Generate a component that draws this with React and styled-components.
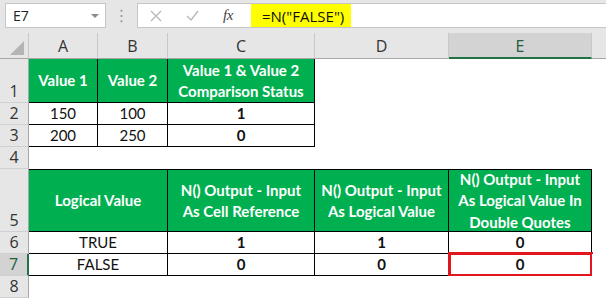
import React from "react";
import styled, { createGlobalStyle } from "styled-components";

const Global = createGlobalStyle`
  html, body { margin: 0; padding: 0; background: #fff; }
  body { width: 606px; height: 298px; overflow: hidden; }
`;

const Page = styled.div`
  width: 606px;
  height: 298px;
  display: flex;
  flex-direction: column;
  overflow: hidden;
  font-family: Lato, "Open Sans", sans-serif;
`;

const TopBar = styled.div`
  height: 33px;
  flex: none;
  background: #e6e6e6;
  display: flex;
  align-items: flex-start;
  padding: 3px 0 0 5px;
  box-sizing: border-box;
`;

const NameBox = styled.div`
  width: 101px;
  height: 25px;
  box-sizing: border-box;
  background: #fff;
  border: 1px solid #c6c6c6;
  display: flex;
  align-items: center;
  justify-content: space-between;
  padding: 0 6px 0 7px;
  font-family: "Open Sans", "Noto Sans", sans-serif;
  font-size: 14px;
  color: #222;
`;

const Caret = styled.span`
  width: 0;
  height: 0;
  border-left: 4px solid transparent;
  border-right: 4px solid transparent;
  border-top: 4px solid #8a8a8a;
`;

const Grip = styled.div`
  width: 31px;
  height: 25px;
  display: flex;
  align-items: center;
  justify-content: center;
  color: #9a9a9a;
  font-size: 16px;
  font-family: "DejaVu Sans", sans-serif;
`;

const FormulaBox = styled.div`
  flex: 1;
  height: 25px;
  box-sizing: border-box;
  background: #fff;
  border: 1px solid #c6c6c6;
  border-right: none;
  display: flex;
  align-items: center;
  padding-left: 12px;
`;

const IconSlot = styled.span`
  width: ${(p) => p.$w}px;
  display: flex;
  align-items: center;
  justify-content: flex-start;
  color: ${(p) => p.$c};
`;

const Fx = styled.span`
  font-family: "Liberation Serif", serif;
  font-style: italic;
  font-size: 15px;
  color: #444;
  letter-spacing: -0.5px;
`;

const Formula = styled.div`
  height: 23px;
  background: #ffff00;
  display: flex;
  align-items: center;
  padding: 0 7px 0 11px;
  font-family: "Open Sans", "Noto Sans", sans-serif;
  font-size: 15px;
  color: #111;
`;

const Sheet = styled.div`
  display: grid;
  grid-template-columns: 29px 69px 70px 147px 134px 143px 1fr;
  grid-template-rows: 26px 44px 22px 22px 22px 63px 22px 22px 22px;
  background: #fff;
`;

const Corner = styled.div`
  background: #e6e6e6;
  border-right: 1px solid #c8c8c8;
  border-bottom: 1px solid #a6a6a6;
  box-sizing: border-box;
  display: flex;
  align-items: flex-end;
  justify-content: flex-end;
  padding: 0 4px 3px 0;
`;

const ColHead = styled.div`
  background: ${(p) => (p.$sel ? "#d3d3d3" : "#e6e6e6")};
  border-right: ${(p) => (p.$end ? "none" : "1px solid #c8c8c8")};
  border-bottom: ${(p) => (p.$sel ? "2px solid #217346" : "1px solid #a6a6a6")};
  box-sizing: border-box;
  display: flex;
  align-items: center;
  justify-content: center;
  padding-top: ${(p) => (p.$sel ? "2px" : "0")};
  font-family: "Open Sans", "Noto Sans", sans-serif;
  font-size: 16px;
  color: ${(p) => (p.$sel ? "#235c3c" : "#333")};
`;

const RowHead = styled.div`
  background: ${(p) => (p.$sel ? "#d3d3d3" : "#e6e6e6")};
  border-right: ${(p) => (p.$sel ? "2px solid #217346" : "1px solid #a6a6a6")};
  border-bottom: 1px solid #d0d0d0;
  box-sizing: border-box;
  display: flex;
  align-items: flex-end;
  justify-content: center;
  padding-bottom: 1px;
  font-family: "Open Sans", "Noto Sans", sans-serif;
  font-size: 16px;
  line-height: 20px;
  color: ${(p) => (p.$sel ? "#235c3c" : "#333")};
`;

const Cell = styled.div`
  box-sizing: border-box;
  position: relative;
  display: flex;
  align-items: center;
  justify-content: center;
  text-align: center;
  font-size: 15px;
  line-height: 21.5px;
  color: ${(p) => (p.$head ? "#fff" : "#111")};
  background: ${(p) => (p.$head ? "#00b050" : "#fff")};
  font-weight: ${(p) => (p.$bold || p.$head ? 700 : 400)};
  border-right: ${(p) => (p.$box ? "1px solid #000" : "none")};
  border-bottom: ${(p) => (p.$box ? "1px solid #000" : "none")};
  border-top: ${(p) => (p.$top ? "1px solid #000" : "none")};
  padding-top: ${(p) => (p.$head ? "1px" : "0")};
`;

const Highlight = styled.div`
  position: absolute;
  left: -1px;
  right: -2px;
  top: -2px;
  bottom: -2px;
  border: 3px solid #e2161e;
  pointer-events: none;
`;

const CornerTri = () => (
  <svg width="14" height="14" viewBox="0 0 14 14">
    <polygon points="14,0 14,14 0,14" fill="#b4b4b4" />
  </svg>
);

const cols = ["A", "B", "C", "D", "E"];

const rows = [
  {
    n: 1,
    cells: [
      { t: "Value 1", head: true, box: true },
      { t: "Value 2", head: true, box: true },
      { t: ["Value 1 & Value 2", "Comparison Status"], head: true, box: true },
      {},
      {},
    ],
  },
  {
    n: 2,
    cells: [
      { t: "150", box: true },
      { t: "100", box: true },
      { t: "1", bold: true, box: true },
      {},
      {},
    ],
  },
  {
    n: 3,
    cells: [
      { t: "200", box: true },
      { t: "250", box: true },
      { t: "0", bold: true, box: true },
      {},
      {},
    ],
  },
  { n: 4, cells: [{}, {}, {}, {}, {}] },
  {
    n: 5,
    cells: [
      { t: "Logical Value", head: true, box: true, top: true, span: 2 },
      { t: ["N() Output - Input", "As Cell Reference"], head: true, box: true, top: true },
      { t: ["N() Output - Input", "As Logical Value"], head: true, box: true, top: true },
      { t: ["N() Output - Input", "As Logical Value In", "Double Quotes"], head: true, box: true, top: true },
    ],
  },
  {
    n: 6,
    cells: [
      { t: "TRUE", box: true, span: 2 },
      { t: "1", bold: true, box: true },
      { t: "1", bold: true, box: true },
      { t: "0", bold: true, box: true },
    ],
  },
  {
    n: 7,
    sel: true,
    cells: [
      { t: "FALSE", box: true, span: 2 },
      { t: "0", bold: true, box: true },
      { t: "0", bold: true, box: true },
      { t: "0", bold: true, box: true, mark: true },
    ],
  },
  { n: 8, cells: [{}, {}, {}, {}, {}] },
];

const Lines = ({ t }) =>
  Array.isArray(t) ? (
    <div>
      {t.map((l, i) => (
        <div key={i}>{l}</div>
      ))}
    </div>
  ) : (
    t || null
  );

export default function App() {
  return (
    <Page>
      <Global />
      <TopBar>
        <NameBox>
          <span>E7</span>
          <Caret />
        </NameBox>
        <Grip>⋮</Grip>
        <FormulaBox>
          <IconSlot $w={36} $c="#bdbdbd">
            <svg width="12" height="12" viewBox="0 0 12 12">
              <path d="M1 1 L11 11 M11 1 L1 11" stroke="#b8b8b8" strokeWidth="1.3" />
            </svg>
          </IconSlot>
          <IconSlot $w={37} $c="#bdbdbd">
            <svg width="13" height="11" viewBox="0 0 13 11">
              <path d="M1 6 L5 10 L12 1" stroke="#b8b8b8" strokeWidth="1.3" fill="none" />
            </svg>
          </IconSlot>
          <IconSlot $w={28} $c="#444">
            <Fx>fx</Fx>
          </IconSlot>
          <Formula>=N("FALSE")</Formula>
        </FormulaBox>
      </TopBar>
      <Sheet>
        <Corner>
          <CornerTri />
        </Corner>
        {cols.map((c) => (
          <ColHead key={c} $sel={c === "E"}>
            {c}
          </ColHead>
        ))}
        <ColHead $end />
        {rows.map((r) => (
          <React.Fragment key={r.n}>
            <RowHead $sel={r.sel}>{r.n}</RowHead>
            {r.cells.map((c, i) => (
              <Cell
                key={i}
                $head={c.head}
                $bold={c.bold}
                $box={c.box}
                $top={c.top}
                style={c.span ? { gridColumn: "span 2" } : undefined}
              >
                <Lines t={c.t} />
                {c.mark && <Highlight />}
              </Cell>
            ))}
            <Cell />
          </React.Fragment>
        ))}
      </Sheet>
    </Page>
  );
}
